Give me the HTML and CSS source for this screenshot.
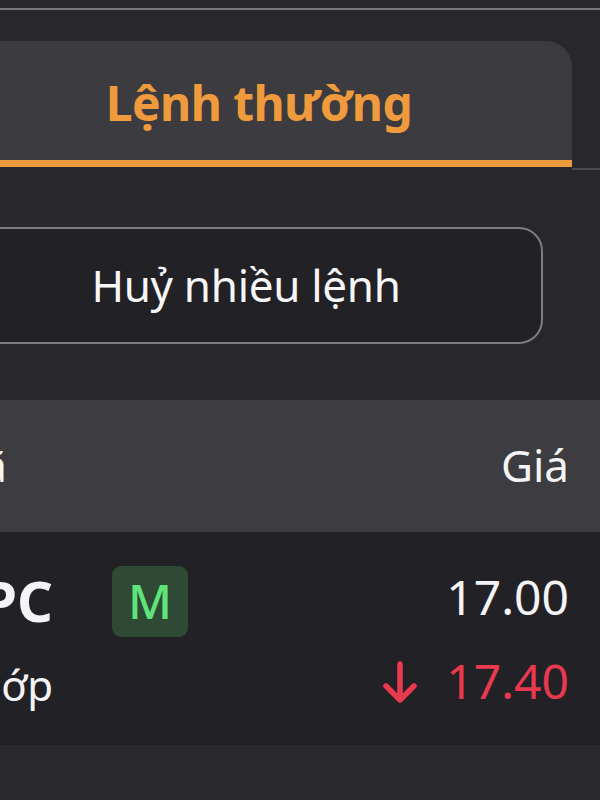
FILE: index.html
```html
<!DOCTYPE html>
<html lang="vi">
<head>
<meta charset="utf-8">
<link rel="stylesheet" href="styles.css">
</head>
<body>
<div class="screen">
  <div class="topline"></div>
  <div class="tabbar">
    <div class="tab">Lệnh thường</div>
    <div class="tab-rest"></div>
  </div>
  <div class="actions">
    <button class="btn">Huỷ nhiều lệnh</button>
  </div>
  <div class="thead">
    <div class="th-left">Mã</div>
    <div class="th-right">Giá</div>
  </div>
  <div class="row">
    <div class="sym">
      <div class="code">PC</div>
      <div class="status">Chờ khớp</div>
    </div>
    <div class="badge">M</div>
    <div class="prices">
      <div class="price">17.00</div>
      <div class="price down">
        <svg class="arrow" width="36" height="44" viewBox="0 0 36 44"><path d="M18 3 V39 M4 25 L18 39 L32 25" fill="none" stroke="#e8394f" stroke-width="5.5" stroke-linecap="round" stroke-linejoin="round"/></svg>
        <span>17.40</span>
      </div>
    </div>
  </div>
  <div class="rest"></div>
</div>
</body>
</html>
```
FILE: styles.css
```css
html, body {
  margin: 0;
  padding: 0;
  background: #27272c;
}
.screen {
  width: 600px;
  height: 800px;
  overflow: hidden;
  background: #27272c;
  font-family: "Noto Sans", "Open Sans", sans-serif;
  color: #f4f4f6;
}
.topline {
  margin-top: 8px;
  height: 2px;
  background: #77777d;
}
.tabbar {
  margin-top: 31px;
  display: flex;
  align-items: flex-end;
}
.tab {
  flex: none;
  box-sizing: border-box;
  width: 626px;
  margin-left: -54px;
  height: 126px;
  background: #3c3c40;
  border-top-right-radius: 26px;
  border-bottom: 7px solid #ec9a3c;
  display: flex;
  align-items: center;
  justify-content: center;
  padding-top: 4px;
  color: #ef9b3d;
  font-weight: 700;
  font-size: 48px;
  letter-spacing: -0.6px;
}
.tab-rest {
  flex: 1;
  height: 2px;
  margin-bottom: -3px;
  background: #4a4a50;
}
.actions {
  padding-top: 60px;
}
.btn {
  display: flex;
  align-items: center;
  justify-content: center;
  box-sizing: border-box;
  width: 594px;
  height: 117px;
  margin: 0 0 0 -51px;
  padding: 0 0 2px;
  background: #222226;
  border: 2px solid #7c7c81;
  border-radius: 24px;
  color: #f6f6f8;
  font-family: "Noto Sans", "Open Sans", sans-serif;
  font-size: 44px;
  font-weight: 400;
  letter-spacing: -0.3px;
}
.thead {
  margin-top: 56px;
  height: 132px;
  background: #3d3d41;
  display: flex;
  align-items: center;
  justify-content: space-between;
  font-size: 44px;
  padding-bottom: 2px;
  box-sizing: border-box;
}
.th-left {
  width: 100px;
  margin-left: -93px;
  text-align: right;
}
.th-right {
  padding-right: 31px;
}
.row {
  height: 213px;
  background: #222226;
  display: flex;
  align-items: flex-start;
  box-sizing: border-box;
  padding-top: 30px;
}
.sym {
  flex: none;
  width: 200px;
  margin-left: -147px;
  text-align: right;
}
.code {
  font-size: 56px;
  font-weight: 700;
  line-height: 76px;
}
.status {
  font-size: 42px;
  line-height: 60px;
  margin-top: 17px;
}
.badge {
  flex: none;
  margin-left: 59px;
  margin-top: 4px;
  width: 76px;
  height: 71px;
  border-radius: 9px;
  background: #2e4a35;
  color: #5fe47c;
  font-size: 48px;
  font-weight: 500;
  display: flex;
  align-items: center;
  justify-content: center;
  padding-bottom: 3px;
  box-sizing: border-box;
}
.prices {
  margin-left: auto;
  padding-right: 31px;
  display: flex;
  flex-direction: column;
  align-items: flex-end;
}
.price {
  font-size: 48px;
  line-height: 70px;
  display: flex;
  align-items: center;
}
.price.down {
  color: #e8394f;
  margin-top: 14px;
}
.arrow {
  margin-right: 28px;
  margin-top: 4px;
}
.rest {
  height: 60px;
  background: #29292e;
}
```
